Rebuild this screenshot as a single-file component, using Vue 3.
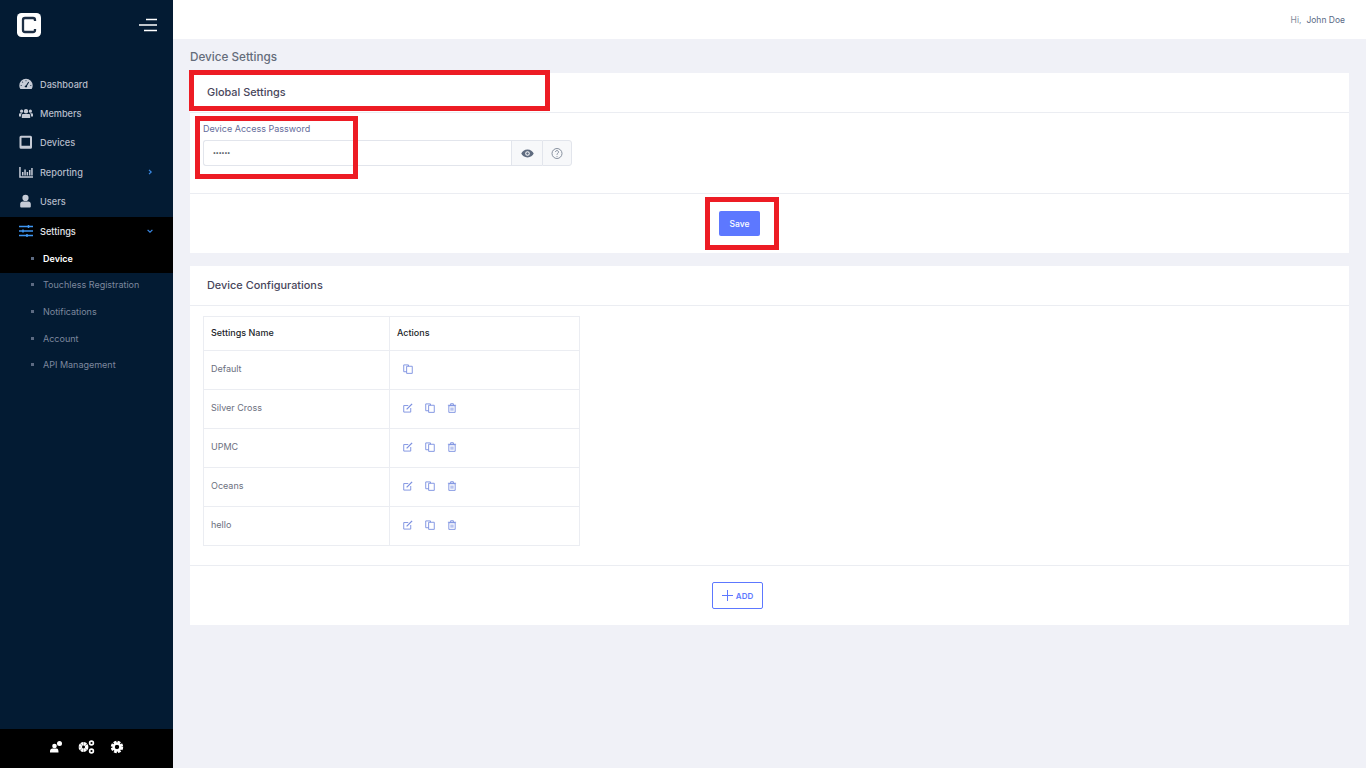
<script setup>
const menu = [
  { label: 'Dashboard', icon: 'dash' },
  { label: 'Members', icon: 'members' },
  { label: 'Devices', icon: 'device' },
  { label: 'Reporting', icon: 'chart', arrow: 'right' },
  { label: 'Users', icon: 'user' },
]
const subs = ['Touchless Registration', 'Notifications', 'Account', 'API Management']
const rows = [
  { name: 'Default', locked: true },
  { name: 'Silver Cross' },
  { name: 'UPMC' },
  { name: 'Oceans' },
  { name: 'hello' },
]
</script>

<template>
  <div class="app">
    <aside class="side">
      <div class="brand">
        <svg class="logo" width="24" height="24" viewBox="0 0 24 24">
          <rect width="24" height="24" rx="4.500" fill="#fff" />
          <path d="M18 8V7a2 2 0 0 0-2-2H8a2 2 0 0 0-2 2v10a2 2 0 0 0 2 2h8a2 2 0 0 0 2-2v-1" fill="none" stroke="#1d2f45" stroke-width="2.300" />
        </svg>
        <svg class="burger" width="18" height="14" viewBox="0 0 18 14">
          <path d="M7 1.500h11M0 7h18M5 12.500h13" stroke="#fff" stroke-width="1.400" />
        </svg>
      </div>
      <nav class="nav">
        <a v-for="m in menu" :key="m.label" class="item">
          <svg class="ico" width="14" height="14" viewBox="0 0 14 14" fill="#c6cbd6">
            <path v-if="m.icon === 'dash'" fill-rule="evenodd" d="M7 1.800A6.700 6.700 0 0 0 .3 8.500c0 1.200.3 2.200.8 3.100l.3.400h11.200l.3-.4c.5-.9.8-1.900.8-3.100A6.700 6.700 0 0 0 7 1.800zM6.600 3.200h.8v1h-.8zM3 5.100l.7-.6.600.7-.7.6zM1.700 8.200h1v.8h-1zm9.600 0h1v.8h-1zM9.300 4.800l.8.4L7.900 9a1 1 0 0 1 .1 1.200H6a1 1 0 0 1 .9-1.700z" />
            <path v-else-if="m.icon === 'members'" d="M7 3a2.200 2.200 0 1 1 0 4.400A2.200 2.200 0 0 1 7 3zM2.600 3.600a1.600 1.600 0 1 1 0 3.200 1.600 1.600 0 0 1 0-3.200zm8.800 0a1.600 1.600 0 1 1 0 3.200 1.600 1.600 0 0 1 0-3.200zM4.200 8h5.600c.8 0 1.400.6 1.400 1.400V12H2.800V9.400C2.800 8.600 3.400 8 4.200 8zM0 8.400c0-.7.5-1.200 1.200-1.200h1.900C2.400 7.700 2 8.400 2 9.300v1.200H0zm14 0c0-.7-.5-1.200-1.200-1.200h-1.900c.7.500 1.100 1.200 1.100 2.100v1.200h2z" />
            <path v-else-if="m.icon === 'device'" fill-rule="evenodd" d="M2 .8h9.500A1.500 1.500 0 0 1 13 2.300v9.900a1.500 1.500 0 0 1-1.500 1.500H2A1.500 1.500 0 0 1 .5 12.200V2.300A1.500 1.500 0 0 1 2 .8zm.5 2v8h8.500v-8z" />
            <path v-else-if="m.icon === 'chart'" d="M.2 2h1.500v9.200H14v1.500H.2zM3 7h1.500v3.500H3zm2.300-2.500h1.500v6H5.300zM7.600 7h1.500v3.500H7.600zM10 5h1.500v5.500H10zm2.200-2h1.500v7.500h-1.500z" />
            <path v-else d="M6.500.8a3.100 3.100 0 1 1 0 6.200 3.100 3.100 0 0 1 0-6.200zM3.600 7.600h5.800c1.400 0 2.400 1 2.400 2.400v2.500a.9.9 0 0 1-.9.9H2.100a.9.9 0 0 1-.9-.9V10c0-1.400 1-2.400 2.400-2.400z" />
          </svg>
          <span class="lbl">{{ m.label }}</span>
          <svg v-if="m.arrow" class="arrow" width="6" height="6" viewBox="0 0 6 6"><path d="M2 .8L4.200 3 2 5.200" fill="none" stroke="#3b8ae6" stroke-width="1.200" /></svg>
        </a>
        <div class="active-group">
          <a class="item on">
            <svg class="ico" width="14" height="14" viewBox="0 0 14 14">
              <path d="M0 2.500h14M0 7h14M0 11.500h14" stroke="#3f96f2" stroke-width="1.300" />
              <path d="M9.500 1v3M4 5.500v3M8 10v3" stroke="#3f96f2" stroke-width="1.500" />
            </svg>
            <span class="lbl">Settings</span>
            <svg class="arrow" width="6" height="6" viewBox="0 0 6 6"><path d="M.6 1.800L3 4.200l2.400-2.400" fill="none" stroke="#3b8ae6" stroke-width="1.200" /></svg>
          </a>
          <a class="sub current"><i></i>Device</a>
        </div>
        <a v-for="s in subs" :key="s" class="sub"><i></i>{{ s }}</a>
      </nav>
      <div class="tools">
        <svg width="14" height="14" viewBox="0 0 14 14" fill="#fff">
          <circle cx="10.500" cy="3.500" r="2.500" /><circle cx="5.500" cy="6" r="2.300" />
          <path d="M1 12.500V11c0-1.500 1.200-2.500 2.500-2.500h4C9 8.500 9.500 10 9.500 12.500z" />
        </svg>
        <svg width="17" height="14" viewBox="0 0 17 14">
          <circle cx="5.500" cy="7" r="3.200" fill="none" stroke="#fff" stroke-width="3.400" stroke-dasharray="2.200 .3" />
          <circle cx="13.500" cy="3" r="1.900" fill="none" stroke="#fff" stroke-width="1.600" />
          <circle cx="13.500" cy="11" r="1.900" fill="none" stroke="#fff" stroke-width="1.600" />
        </svg>
        <svg width="14" height="14" viewBox="0 0 14 14">
          <circle cx="7" cy="7" r="4.200" fill="none" stroke="#fff" stroke-width="4" stroke-dasharray="2.300 1" />
          <circle cx="7" cy="7" r="3.500" fill="none" stroke="#fff" stroke-width="2.400" />
        </svg>
      </div>
    </aside>

    <div class="main">
      <header class="top"><span class="hi">Hi,</span><span class="who">John Doe</span></header>
      <div class="content">
        <h1>Device Settings</h1>

        <section class="card first">
          <div class="head">Global Settings</div>
          <div class="body form">
            <label>Device Access Password</label>
            <div class="group">
              <div class="input">••••••</div>
              <button class="addon">
                <svg width="13" height="13" viewBox="0 0 14 14"><path fill-rule="evenodd" fill="#5f6b7f" d="M7 2.800C3.800 2.800 1.300 5 .3 7c1 2 3.500 4.200 6.700 4.200S12.700 9 13.700 7C12.700 5 10.200 2.800 7 2.800zm0 1.700a2.500 2.500 0 1 1 0 5 2.500 2.500 0 0 1 0-5z" /><circle cx="7" cy="7" r="1.300" fill="#5f6b7f" /></svg>
              </button>
              <button class="addon last">
                <svg width="12" height="13" viewBox="0 0 12 13" fill="none" stroke="#7b8494" stroke-width=".9"><circle cx="6" cy="6.500" r="5" /><path d="M4.500 5a1.500 1.500 0 1 1 2.300 1.300C6.200 6.700 6 7 6 7.800M6 9v.8" /></svg>
              </button>
            </div>
          </div>
          <div class="foot"><button class="save">Save</button></div>
        </section>

        <section class="card">
          <div class="head">Device Configurations</div>
          <div class="body list">
            <table>
              <thead><tr><th class="c1">Settings Name</th><th>Actions</th></tr></thead>
              <tbody>
                <tr v-for="r in rows" :key="r.name">
                  <td class="c1">{{ r.name }}</td>
                  <td>
                    <div class="acts">
                      <svg v-if="!r.locked" width="10" height="10" viewBox="0 0 11 11" fill="none" stroke="#7b8fe0" stroke-width="1"><path d="M8.500 5.500v4.500H.8V2.800h5" /><path d="M4 7l6-6" stroke-width="1.400" /></svg>
                      <svg width="10" height="10" viewBox="0 0 11 11" fill="none" stroke="#7b8fe0" stroke-width="1"><path d="M6 2.500V1H.8v7.500H4" /><path d="M4 2.500h6.200v7.800H4z" /></svg>
                      <svg v-if="!r.locked" width="10" height="10" viewBox="0 0 11 11" fill="none" stroke="#7b8fe0" stroke-width="1"><path d="M2 3h7v7.300H2zM1 2.500h9M4 2.500V.8h3v1.700M4.500 5v3.500M6.500 5v3.500" /></svg>
                    </div>
                  </td>
                </tr>
              </tbody>
            </table>
          </div>
          <div class="foot add">
            <button class="addbtn">
              <svg width="11" height="11" viewBox="0 0 11 11"><path d="M5.500 0v11M0 5.500h11" stroke="#5d78ff" stroke-width="1" /></svg>
              ADD
            </button>
          </div>
        </section>
      </div>
    </div>

    <div class="mark m1"></div>
    <div class="mark m2"></div>
    <div class="mark m3"></div>
  </div>
</template>

<style>
html, body { margin: 0; background: #f0f1f7; }
</style>

<style scoped>
.app { position: relative; display: flex; width: 1366px; height: 768px; overflow: hidden; font-family: Inter, "Liberation Sans", sans-serif; color: #595d6e; }
.side { width: 173px; flex: none; background: #031b33; display: flex; flex-direction: column; }
.brand { height: 69px; flex: none; box-sizing: border-box; padding: 13px 16px 0 17px; display: flex; justify-content: space-between; align-items: flex-start; }
.burger { margin-top: 5px; }
.nav { flex: 1; display: flex; flex-direction: column; }
.item { height: 29.330px; flex: none; display: flex; align-items: center; padding-left: 19px; padding-right: 20px; font-size: 9.200px; color: #b7bdca; font-weight: 500; }
.lbl { padding-top: 1px; }
.ico { margin-right: 7px; flex: none; }
.arrow { margin-left: auto; }
.active-group { background: #000; margin-top: 1px; }
.item.on { color: #e4e6ec; height: 28px; }
.sub { height: 26.600px; flex: none; box-sizing: border-box; padding-bottom: 2px; display: flex; align-items: center; padding-left: 31px; font-size: 9px; color: #7d889e; font-weight: 400; }
.sub i { width: 3px; height: 3px; background: #5c6a82; margin-right: 9px; }
.sub.current { color: #fff; font-weight: 600; height: 28px; padding-bottom: 0; }
.tools { height: 39px; flex: none; box-sizing: border-box; padding: 0 1px 3px 0; background: #000; display: flex; align-items: center; justify-content: center; gap: 15px; }
.main { flex: 1; display: flex; flex-direction: column; min-width: 0; }
.top { height: 39px; flex: none; background: #fff; display: flex; justify-content: flex-end; align-items: center; padding-right: 21px; font-size: 8.500px; gap: 5px; }
.hi { color: #7d8a9c; }
.who { color: #5a6a85; }
.content { padding: 0 17px; }
h1 { margin: 0; height: 33px; padding-top: 1px; display: flex; align-items: center; font-size: 11.700px; font-weight: 500; color: #646c7a; }
.card { background: #fff; margin-bottom: 13px; }
.head { height: 37px; padding-bottom: 2px; border-bottom: 1px solid #ebedf2; display: flex; align-items: center; padding-left: 17px; font-size: 10.900px; font-weight: 500; color: #48465b; }
.form { height: 80px; box-sizing: border-box; padding: 11px 13px 0; }
label { display: block; height: 16px; font-size: 9px; line-height: 9px; color: #646c9a; }
.group { display: flex; height: 26px; width: 369px; }
.input { flex: 1; box-sizing: border-box; border: 1px solid #e2e5ec; border-right: 0; border-radius: 3px 0 0 3px; padding-left: 9px; font-size: 6px; font-weight: 700; line-height: 24px; color: #495057; }
.addon { width: 31px; padding: 0; background: #f7f8fa; border: 1px solid #e2e5ec; border-right: 0; display: flex; align-items: center; justify-content: center; }
.addon.last { width: 30px; border-right: 1px solid #e2e5ec; border-radius: 0 3px 3px 0; }
.foot { border-top: 1px solid #ebedf2; display: flex; justify-content: center; }
.first .foot { height: 60px; padding: 17px 60px 0 0; box-sizing: border-box; align-items: flex-start; }
.save { width: 41px; height: 25px; padding: 0; border: 0; border-radius: 2px; background: #5d78ff; color: #fff; font: 500 8.500px Inter, sans-serif; }
.list { height: 259px; box-sizing: border-box; padding: 10px 13px 0; }
table { border-collapse: collapse; width: 377px; table-layout: fixed; }
th, td { border: 1px solid #ebedf2; padding: 0 7px; text-align: left; font-size: 9px; }
th { height: 31px; padding-bottom: 2px; font-weight: 500; color: #212529; }
td { height: 35px; padding-bottom: 3px; color: #6c7080; }
.c1 { width: 171px; }
.acts { display: flex; gap: 12px; padding-left: 6px; }
.add { height: 60px; align-items: flex-start; padding: 16px 64px 0 0; box-sizing: border-box; }
.addbtn { width: 51px; height: 27px; padding: 0; box-sizing: border-box; background: #fff; border: 1px solid #5d78ff; border-radius: 2px; color: #5d78ff; font: 600 8px Inter, sans-serif; display: flex; align-items: center; justify-content: center; gap: 3px; }
.mark { position: absolute; box-sizing: border-box; border: 5px solid #ed1c24; pointer-events: none; }
.m1 { left: 189px; top: 70px; width: 361px; height: 41px; }
.m2 { left: 195px; top: 116px; width: 163px; height: 63px; }
.m3 { left: 705px; top: 197px; width: 74px; height: 53px; }
</style>
